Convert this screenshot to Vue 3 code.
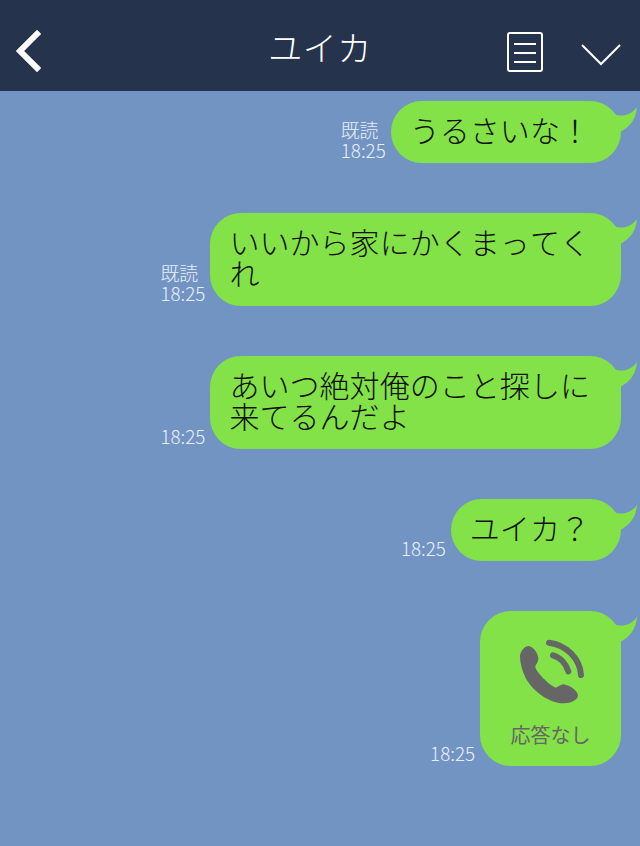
<script setup>
const messages = [
  { lines: ['うるさいな！'], read: true },
  { lines: ['いいから家にかくまってく', 'れ'], read: true },
  { lines: ['あいつ絶対俺のこと探しに', '来てるんだよ'], read: false },
  { lines: ['ユイカ？'], read: false },
];
</script>

<template>
  <div class="screen">
    <header class="header">
      <div class="header-left">
        <svg class="back" width="26" height="42" viewBox="0 0 26 42">
          <path d="M22 4 L5 21 L22 38" fill="none" stroke="#fff" stroke-width="6" stroke-linecap="square" />
        </svg>
      </div>
      <h1 class="title">ユイカ</h1>
      <div class="header-right">
        <svg width="36" height="42" viewBox="0 0 36 42">
          <rect x="1" y="2" width="34" height="38" rx="2" fill="none" stroke="#fff" stroke-width="2" />
          <path d="M7 13 H29 M7 22 H29 M7 31 H29" stroke="#fff" stroke-width="2" />
        </svg>
        <svg class="down" width="40" height="22" viewBox="0 0 40 22">
          <path d="M1 1 L20 20 L39 1" fill="none" stroke="#fff" stroke-width="2" />
        </svg>
      </div>
    </header>

    <main class="chat">
      <div v-for="(m, i) in messages" :key="i" class="row">
        <div class="meta">
          <span v-if="m.read">既読</span>
          <span>18:25</span>
        </div>
        <div class="bubble">
          <template v-for="(line, j) in m.lines" :key="j">{{ line }}<br /></template>
          <svg class="tail" width="24" height="28" viewBox="0 0 24 28">
            <path d="M0 8 C9 12 18 8 23 1 C22 13 16 21 6 26 Z" fill="#83e247" />
          </svg>
        </div>
      </div>

      <div class="row">
        <div class="meta">
          <span>18:25</span>
        </div>
        <div class="bubble call">
          <svg class="phone" width="90" height="85" viewBox="0 0 270 255">
            <path d="M68 48 C82 50 95 68 97 84 C98 98 88 102 88 112 C92 128 124 160 146 172 C154 176 160 164 172 163 C190 166 212 178 216 196 C216 210 192 221 172 220 C128 218 84 186 60 146 C48 122 42 100 42 78 C44 62 56 48 68 48 Z" fill="#666" />
            <path d="M129 38 C180 44 222 86 225 135" fill="none" stroke="#666" stroke-width="18" stroke-linecap="round" />
            <path d="M141 76 C162 82 180 100 187 124" fill="none" stroke="#666" stroke-width="18" stroke-linecap="round" />
          </svg>
          <div class="call-label">応答なし</div>
          <svg class="tail" width="24" height="28" viewBox="0 0 24 28">
            <path d="M0 8 C9 12 18 8 23 1 C22 13 16 21 6 26 Z" fill="#83e247" />
          </svg>
        </div>
      </div>
    </main>
  </div>
</template>

<style>
html,
body {
  margin: 0;
  background: #7294c3;
}
</style>

<style scoped>
.screen {
  width: 640px;
  height: 846px;
  overflow: hidden;
  background: #7294c3;
  font-family: "Noto Sans CJK JP", "Noto Sans", sans-serif;
  font-kerning: none;
}

.header {
  height: 91px;
  box-sizing: border-box;
  padding-top: 12px;
  background: #26334d;
  display: grid;
  grid-template-columns: 1fr auto 1fr;
  align-items: center;
}

.header-left {
  padding-left: 15px;
  display: flex;
}

.back {
  margin-top: -2px;
}

.title {
  margin: 0;
  color: #fff;
  font-size: 34px;
  font-weight: 300;
  line-height: 40px;
  letter-spacing: 0.5px;
  padding-bottom: 10px;
}

.header-right {
  display: flex;
  align-items: center;
  justify-content: flex-end;
  gap: 38px;
  padding-right: 19px;
}

.down {
  margin-top: 7px;
}

.chat {
  display: flex;
  flex-direction: column;
  gap: 50px;
  padding: 10px 19px 0 0;
}

.row {
  display: flex;
  justify-content: flex-end;
  align-items: flex-end;
  gap: 5px;
}

.meta {
  display: flex;
  flex-direction: column;
  color: #e8eef8;
  font-size: 18.8px;
  font-weight: 300;
  line-height: 20px;
  padding-bottom: 3px;
}

.bubble {
  position: relative;
  background: #83e247;
  color: #111;
  border-radius: 31px;
  padding: 13px 31px 18px 19px;
  font-size: 30px;
  line-height: 31px;
  font-weight: 300;
  letter-spacing: 0.05px;
  white-space: nowrap;
}

.tail {
  position: absolute;
  top: 5px;
  right: -17px;
}

.call {
  width: 141px;
  height: 155px;
  box-sizing: border-box;
  padding: 19px 0 0;
  display: flex;
  flex-direction: column;
  align-items: center;
}

.call-label {
  margin-top: 6px;
  color: #666;
  font-size: 20px;
  font-weight: 400;
  line-height: 28px;
}
</style>
